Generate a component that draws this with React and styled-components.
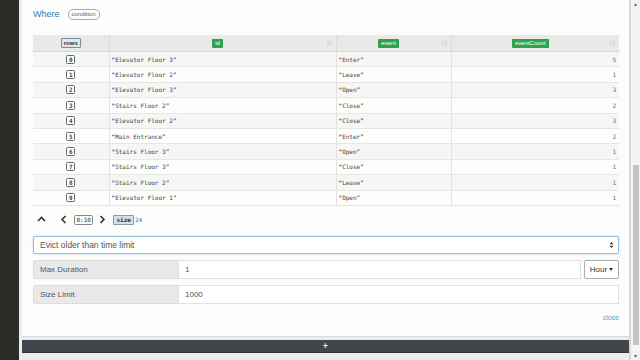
import React from 'react';
import styled, {createGlobalStyle} from 'styled-components';

const GlobalStyle = createGlobalStyle`
  html, body {
    margin: 0;
    padding: 0;
    width: 640px;
    height: 360px;
    overflow: hidden;
    background: #ededf0;
    font-family: "Liberation Sans", Arial, sans-serif;
  }
`;

const ROWS = [
  ['Elevator Floor 3', 'Enter', 5],
  ['Elevator Floor 2', 'Leave', 1],
  ['Elevator Floor 3', 'Open', 3],
  ['Stairs Floor 2', 'Close', 2],
  ['Elevator Floor 2', 'Close', 3],
  ['Main Entrance', 'Enter', 2],
  ['Stairs Floor 3', 'Open', 1],
  ['Stairs Floor 3', 'Close', 1],
  ['Stairs Floor 2', 'Leave', 1],
  ['Elevator Floor 1', 'Open', 1],
];

const SortIcon = () => (
  <SortSvg width="7" height="8" viewBox="0 0 7 8">
    <path d="M2 7V2M0.9 3.1L2 2l1.1 1.1" stroke="#c8c8c8" strokeWidth="0.7" fill="none"/>
    <path d="M5 1v5M3.9 4.9L5 6l1.1-1.1" stroke="#c8c8c8" strokeWidth="0.7" fill="none"/>
  </SortSvg>
);

const Chevron = ({dir}) => {
  const paths = {
    up: 'M1 6l3.5-3.5L8 6',
    left: 'M5.5 1L2 4.5 5.5 8',
    right: 'M2.5 1L6 4.5 2.5 8',
  };
  return (
    <svg width="9" height="9" viewBox="0 0 9 9">
      <path d={paths[dir]} stroke="#333" strokeWidth="1.6" fill="none"/>
    </svg>
  );
};

const App = () => {
  return (
    <>
      <GlobalStyle/>
      <Page>
        <LeftStrip/>
        <Main>
          <Panel>
            <WhereRow>
              <Link>Where</Link>
              <Pill>condition</Pill>
            </WhereRow>
            <Table>
              <colgroup>
                <col style={{width: 76}}/>
                <col style={{width: 227}}/>
                <col style={{width: 115}}/>
                <col style={{width: 168}}/>
              </colgroup>
              <thead>
                <tr>
                  <Th><RowsBadge>rows</RowsBadge></Th>
                  <Th $sortable><ColBadge>id</ColBadge><SortIcon/></Th>
                  <Th $sortable><ColBadge>event</ColBadge><SortIcon/></Th>
                  <Th $sortable><ColBadge>eventCount</ColBadge><SortIcon/></Th>
                </tr>
              </thead>
              <tbody>
                {ROWS.map(([id, event, count], i) => (
                  <Tr key={i} $striped={i % 2 === 0}>
                    <IndexCell><IndexBadge>{i}</IndexBadge></IndexCell>
                    <TextCell>“{id}”</TextCell>
                    <TextCell>“{event}”</TextCell>
                    <NumCell>{count}</NumCell>
                  </Tr>
                ))}
              </tbody>
            </Table>
            <Pager>
              <Chevron dir="up"/>
              <Gap/>
              <Chevron dir="left"/>
              <RangeBox>0:10</RangeBox>
              <Chevron dir="right"/>
              <SizeBadge>size</SizeBadge>
              <SizeValue>24</SizeValue>
            </Pager>
            <Select>
              <span>Evict older than time limit</span>
              <svg width="5" height="8" viewBox="0 0 5 8">
                <path d="M0.5 3.2L2.5 1l2 2.2zM0.5 4.8L2.5 7l2-2.2z" fill="#333"/>
              </svg>
            </Select>
            <Field>
              <Label>Max Duration</Label>
              <Input>1</Input>
              <Dropdown>Hour <Caret/></Dropdown>
            </Field>
            <Field>
              <Label>Size Limit</Label>
              <Input>1000</Input>
            </Field>
            <CloseRow>
              <CloseLink>close</CloseLink>
            </CloseRow>
          </Panel>
          <DarkBar>+</DarkBar>
        </Main>
        <Scrollbar>
          <ScrollArrow>▴</ScrollArrow>
          <Thumb/>
          <ScrollArrow>▾</ScrollArrow>
        </Scrollbar>
      </Page>
    </>
  );
};

const Page = styled.div`
  display: flex;
  width: 640px;
  height: 360px;
`;

const LeftStrip = styled.div`
  width: 19px;
  flex-shrink: 0;
  background: #2c2c29;
`;

const Main = styled.div`
  width: 607px;
  flex-shrink: 0;
  padding-left: 3px;
  display: flex;
  flex-direction: column;
  background: #ededf0;
`;

const Panel = styled.div`
  height: 337px;
  flex-shrink: 0;
  background: #fcfcfa;
  border-bottom: 1px solid #d9d9d9;
  padding: 7px 8px 0 11px;
  box-sizing: border-box;
  display: flex;
  flex-direction: column;
`;

const WhereRow = styled.div`
  display: flex;
  align-items: center;
  gap: 8px;
  height: 14px;
`;

const Link = styled.a`
  color: #337ab7;
  font-size: 9px;
`;

const Pill = styled.span`
  font-size: 6px;
  color: #666;
  border: 1px solid #aaa;
  border-radius: 5px;
  padding: 1px 3px;
  line-height: 7px;
`;

const Table = styled.table`
  margin-top: 14px;
  width: 586px;
  table-layout: fixed;
  border-collapse: collapse;
  font-size: 6px;
  line-height: 7px;
  flex-shrink: 0;
`;

const Th = styled.th`
  height: 16px;
  padding: 0 ${p => (p.$sortable ? '10px' : '0')} 0 0;
  background: #e9e9e7;
  border-left: 1px solid #dcdcdc;
  border-bottom: 1px solid #d6d6d6;
  text-align: center;
  position: relative;
  &:first-child {
    border-left: none;
  }
`;

const SortSvg = styled.svg`
  position: absolute;
  right: 3px;
  top: 4px;
`;

const RowsBadge = styled.span`
  display: inline-block;
  font-size: 6px;
  line-height: 8px;
  padding: 0 2px;
  color: #333;
  background: #dfe6ec;
  border: 1px solid #7d8a96;
  border-radius: 1px;
  vertical-align: middle;
`;

const ColBadge = styled.span`
  display: inline-block;
  font-size: 6px;
  font-weight: normal;
  line-height: 9px;
  padding: 0 3px;
  color: #fff;
  background: #2fa34a;
  border-radius: 1px;
  vertical-align: middle;
`;

const Tr = styled.tr`
  height: 15.4px;
  background: ${p => (p.$striped ? '#f6f6f4' : '#fdfdfb')};
  & > td {
    border-bottom: 1px solid #e6e6e4;
    border-left: 1px solid #e2e2e0;
  }
  & > td:first-child {
    border-left: none;
  }
`;

const IndexCell = styled.td`
  text-align: center;
  padding: 0;
`;

const IndexBadge = styled.span`
  display: inline-block;
  font-family: "DejaVu Sans Mono", monospace;
  font-size: 6px;
  font-weight: bold;
  line-height: 7px;
  padding: 0 1.5px;
  color: #444;
  background: #fff;
  border: 1px solid #666;
  border-radius: 1.5px;
  vertical-align: middle;
`;

const TextCell = styled.td`
  font-family: "DejaVu Sans Mono", monospace;
  font-size: 6px;
  color: #444;
  padding: 0 0 0 2px;
  white-space: pre;
`;

const NumCell = styled.td`
  font-family: "DejaVu Sans Mono", monospace;
  font-size: 6px;
  color: #337ab7;
  text-align: right;
  padding: 0 3px 0 0;
`;

const Pager = styled.div`
  display: flex;
  align-items: center;
  height: 12px;
  margin-top: 8px;
  padding-left: 4px;
  gap: 6px;
`;

const Gap = styled.span`
  width: 2px;
`;

const RangeBox = styled.span`
  font-family: "DejaVu Sans Mono", monospace;
  font-size: 6px;
  line-height: 8px;
  padding: 0 1.5px;
  border: 1px solid #888;
  border-radius: 1.5px;
  color: #333;
  margin: 0 -1px;
`;

const SizeBadge = styled.span`
  font-family: "DejaVu Sans Mono", monospace;
  font-size: 6px;
  font-weight: bold;
  line-height: 8px;
  padding: 0 2px;
  background: #d9e0e7;
  border: 1px solid #8c98a4;
  border-radius: 1px;
  color: #333;
  margin-right: -5px;
`;

const SizeValue = styled.span`
  font-family: "DejaVu Sans Mono", monospace;
  font-size: 6px;
  color: #337ab7;
`;

const Select = styled.div`
  margin-top: 10px;
  height: 18px;
  flex-shrink: 0;
  width: 586px;
  box-sizing: border-box;
  border: 1px solid #8fc1e3;
  box-shadow: 0 0 2px rgba(102, 175, 233, 0.5);
  border-radius: 2px;
  background: #fff;
  display: flex;
  align-items: center;
  justify-content: space-between;
  padding: 0 4px 0 6px;
  font-size: 8.5px;
  color: #555;
`;

const Field = styled.div`
  margin-top: 6px;
  display: flex;
  align-items: center;
  width: 586px;
  height: 19px;
  flex-shrink: 0;
`;

const Label = styled.div`
  width: 146px;
  height: 100%;
  box-sizing: border-box;
  background: #e9e9e9;
  border: 1px solid #dcdcdc;
  border-radius: 2px 0 0 2px;
  display: flex;
  align-items: center;
  padding-left: 6px;
  font-size: 8px;
  color: #555;
`;

const Input = styled.div`
  flex: 1;
  height: 100%;
  box-sizing: border-box;
  border: 1px solid #e0e0e0;
  border-left: none;
  background: #fff;
  display: flex;
  align-items: center;
  padding-left: 6px;
  font-size: 8px;
  color: #555;
`;

const Dropdown = styled.div`
  margin-left: 3px;
  width: 35px;
  height: 19px;
  box-sizing: border-box;
  border: 1px solid #adadad;
  border-radius: 2px;
  background: #fff;
  display: flex;
  align-items: center;
  justify-content: center;
  gap: 2px;
  font-size: 8px;
  color: #333;
`;

const Caret = styled.span`
  width: 0;
  height: 0;
  border-left: 2.5px solid transparent;
  border-right: 2.5px solid transparent;
  border-top: 3px solid #333;
`;

const CloseRow = styled.div`
  display: flex;
  justify-content: flex-end;
  width: 586px;
  margin-top: 10px;
`;

const CloseLink = styled.a`
  font-size: 7px;
  color: #5b9dd0;
`;

const DarkBar = styled.div`
  margin-top: 3px;
  height: 12px;
  flex-shrink: 0;
  background: #3f474d;
  color: #e8e8e8;
  font-size: 9px;
  font-weight: bold;
  line-height: 12px;
  text-align: center;
  border-bottom: 1px solid #2f3438;
`;

const Scrollbar = styled.div`
  width: 11px;
  flex-shrink: 0;
  border-left: 2px solid #d8d8d8;
  box-sizing: border-box;
  background: #f4f4f4;
  display: flex;
  flex-direction: column;
  align-items: center;
`;

const ScrollArrow = styled.span`
  font-size: 6px;
  line-height: 8px;
  color: #666;
`;

const Thumb = styled.div`
  width: 6px;
  margin-top: 157px;
  height: 180px;
  background: #c4c4c4;
  margin-bottom: auto;
`;

export default App;
